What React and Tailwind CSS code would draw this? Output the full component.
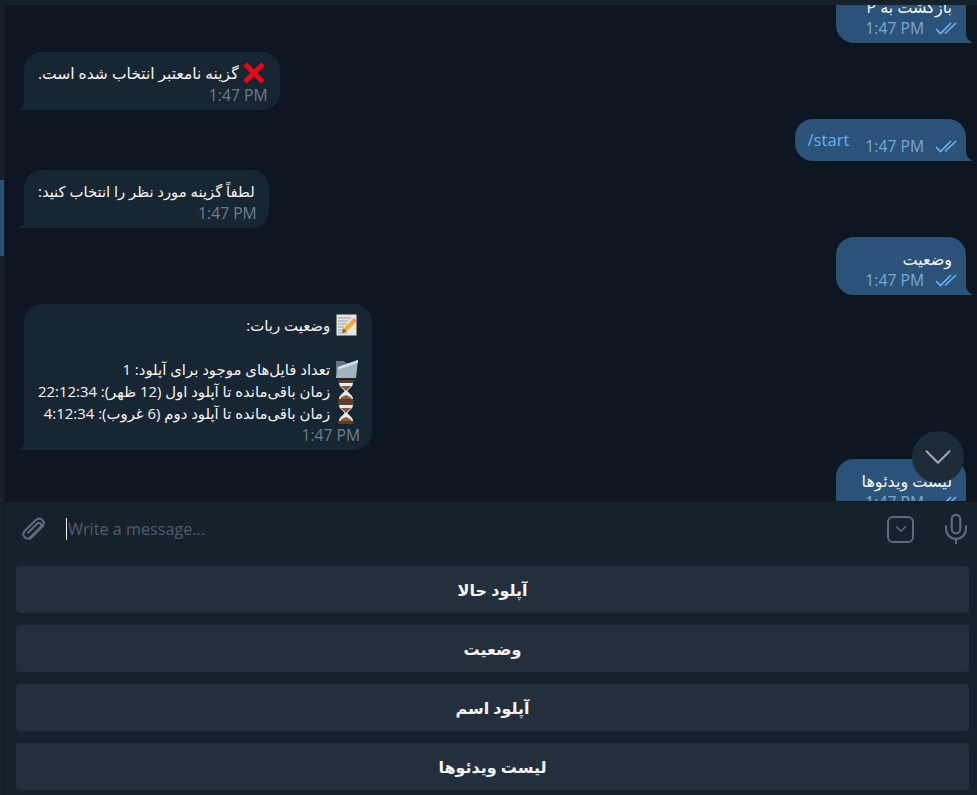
import React from 'react'
import { Mic, ChevronDown } from 'lucide-react'

function Checks() {
    return (
        <svg width="22" height="13" viewBox="0 0 22 13" fill="none" stroke="#6ab3f3" strokeWidth="1.7" className="ml-[11px] shrink-0">
            <path d="M1 7l4.500 4.500L16 1" />
            <path d="M10 11.500L21 1" />
        </svg>
    )
}

function CrossEmoji() {
    return (
        <svg width="24" height="24" viewBox="0 0 24 24" className="shrink-0">
            <path d="M3 3L21 21M21 3L3 21" stroke="#e50914" strokeWidth="5" />
        </svg>
    )
}

function MemoEmoji() {
    return (
        <svg width="21" height="22" viewBox="0 0 21 22" className="shrink-0">
            <rect x="0.500" y="0.500" width="20" height="21" fill="#e6e6df" />
            <path d="M2 4h13M2 7h10M2 10h9M2 13h6M2 16h5M2 19h9" stroke="#9a9d9f" strokeWidth="1" />
            <path d="M6 19l1.500-4.500 8.500-8.500 3 3-8.500 8.500z" fill="#edb02c" />
            <path d="M6 19l1.500-4.500 3 3z" fill="#6b5a3c" />
            <path d="M16 6l2-2 3 3-2 2z" fill="#e58a9a" />
        </svg>
    )
}

function FolderEmoji() {
    return (
        <svg width="23" height="22" viewBox="0 0 23 22" className="shrink-0">
            <path d="M1 3h8l2 2h9v15H1z" fill="#66747f" />
            <path d="M3 9L23 2l-2 18H1z" fill="#a3b2bf" />
            <path d="M3 9L23 2l-.4 3L2.600 12z" fill="#d5dee5" />
        </svg>
    )
}

function HourglassEmoji() {
    return (
        <svg width="18" height="22" viewBox="0 0 18 22" className="shrink-0">
            <rect x="1" y="0" width="16" height="3" rx="1.500" fill="#5a3d2a" />
            <rect x="1" y="19" width="16" height="3" rx="1.500" fill="#5a3d2a" />
            <path d="M2 3h14c0 4-5 6-5.500 8 .5 2 5.500 4 5.500 8H2c0-4 5-6 5.500-8C7 9 2 7 2 3z" fill="#e7e9ea" />
            <path d="M4 6h10c-1 2-4 3-5 5-1-2-4-3-5-5z" fill="#8a5a36" />
            <path d="M3.500 19c0-2 3.500-3 5.500-4 2 1 5.500 2 5.500 4z" fill="#8a5a36" />
        </svg>
    )
}

function IncomingTail() {
    return (
        <svg width="14" height="16" viewBox="0 0 14 16" className="absolute left-[-6px] bottom-0" fill="#182533">
            <path d="M6 0v8c0 3-2 6-6 8h14V0z" />
        </svg>
    )
}

function OutgoingTail() {
    return (
        <svg width="14" height="16" viewBox="0 0 14 16" className="absolute right-[-7px] bottom-0" fill="#2b5278">
            <path d="M7 0v7c0 4 3 7 7 9H0V0z" />
        </svg>
    )
}

function Incoming({ children, size = 'text-[14.9px]' }) {
    return (
        <div className="relative ml-[19px] self-start rounded-[18px] rounded-bl-none bg-[#182533] pb-[5px] pl-[14px] pr-[12px] pt-[10px]">
            <IncomingTail />
            <div dir="rtl" className={`pr-[2px] leading-[22px] text-[#f5f5f5] ${size}`}>{children}</div>
            <div className="mt-[1px] text-right text-[15.7px] leading-[20px] text-[#6d7f8f]">1:47 PM</div>
        </div>
    )
}

function Outgoing({ children }) {
    return (
        <div className="relative mr-[11px] h-[58px] w-[130px] shrink-0 self-end rounded-[18px] rounded-br-none bg-[#2b5278] pr-[9px] pt-[11px]">
            <OutgoingTail />
            <div dir="rtl" className="pr-[5px] text-[16px] leading-[22px] text-[#f5f5f5]">{children}</div>
            <div className="flex items-center justify-end">
                <span className="text-[15.7px] leading-[20px] text-[#7da8d3]">1:47 PM</span>
                <Checks />
            </div>
        </div>
    )
}

function Command({ children }) {
    return (
        <div className="relative mr-[11px] flex h-[42px] shrink-0 items-start self-end rounded-[18px] rounded-br-none bg-[#2b5278] pl-[13px] pr-[9px] pt-[10px]">
            <OutgoingTail />
            <span className="mr-[16px] text-[16.6px] leading-[22px] text-[#6ab3f3]">{children}</span>
            <div className="mt-[7px] flex items-center">
                <span className="text-[15.7px] leading-[20px] text-[#7da8d3]">1:47 PM</span>
                <Checks />
            </div>
        </div>
    )
}

function KeyboardButton({ children }) {
    return (
        <button dir="rtl" className="flex h-[47px] w-full items-center justify-center rounded-[4px] bg-[#242f3d] pt-[1px] text-[16px] font-bold text-[#f5f5f5]">
            {children}
        </button>
    )
}

function Line({ icon, children }) {
    return (
        <div className="flex items-center gap-[4px]">
            <span className="flex h-[22px] w-[24px] items-center justify-center">{icon}</span>
            <span>{children}</span>
        </div>
    )
}

export default function App() {
    return (
        <div className="flex h-[795px] w-[977px] overflow-hidden bg-[#17212b] font-['Open_Sans','DejaVu_Sans',sans-serif]">
            <aside className="w-[4px] shrink-0 pt-[180px]">
                <div className="h-[76px] bg-[#2b5278]" />
            </aside>

            <main className="flex min-w-0 flex-1 flex-col border-l border-[#131c26]">
                <div className="h-[5px] shrink-0 bg-[#17212b]" />

                <div className="relative h-[496px] shrink-0 overflow-hidden bg-[#0e1621]">
                    <div className="-mt-[20px] flex flex-col gap-[9px]">
                        <Outgoing>بازگشت به P</Outgoing>
                        <Incoming size="text-[15.5px]">
                            <div className="flex h-[22px] items-center gap-[3px]"><CrossEmoji /><span>گزینه نامعتبر انتخاب شده است.</span></div>
                        </Incoming>
                        <Command>/start</Command>
                        <Incoming size="text-[14.8px]">لطفاً گزینه مورد نظر را انتخاب کنید:</Incoming>
                        <Outgoing>وضعیت</Outgoing>
                        <Incoming>
                            <Line icon={<MemoEmoji />}>وضعیت ربات:</Line>
                            <div className="h-[22px]" />
                            <Line icon={<FolderEmoji />}>تعداد فایل‌های موجود برای آپلود: 1</Line>
                            <Line icon={<HourglassEmoji />}>زمان باقی‌مانده تا آپلود اول (12 ظهر): 22:12:34</Line>
                            <Line icon={<HourglassEmoji />}>زمان باقی‌مانده تا آپلود دوم (6 غروب): 4:12:34</Line>
                        </Incoming>
                        <Outgoing>لیست ویدئوها</Outgoing>
                    </div>

                    <div className="absolute left-[907px] top-[426px] flex h-[52px] w-[52px] items-center justify-center rounded-full bg-[#1e2c3a] text-[#a0aab4]">
                        <ChevronDown size={46} strokeWidth={1} />
                    </div>
                </div>

                <div className="flex h-[55px] shrink-0 items-center border-t border-[#0f1722] pl-[15px] pr-[4px]">
                    <svg width="28" height="28" viewBox="0 0 24 24" fill="none" stroke="#5d6c7a" strokeWidth="1.8" strokeLinecap="round" className="shrink-0">
                        <path d="M8.500 20.500l10-10c2-2 2.500-4.500.7-6.300-1.800-1.800-4.300-1.300-6.300.7L4 13.800c-1.500 1.500-1.500 3.800 0 5.300s3.500 1.300 5-.2l8.500-8.500c.9-.9 1-2.200.2-3s-2-.7-3 .2L7 15.300" />
                    </svg>
                    <div className="ml-[18px] h-[22px] w-px bg-[#f5f5f5]" />
                    <span className="ml-[1px] flex-1 text-[16.2px] text-[#505d6a]">Write a message...</span>
                    <div className="mr-[25px] flex h-[27px] w-[27px] items-center justify-center rounded-[6px] border-2 border-[#5d6c7a] text-[#5d6c7a]">
                        <ChevronDown size={18} strokeWidth={1.8} />
                    </div>
                    <Mic size={34} strokeWidth={1.5} className="text-[#5d6c7a]" />
                </div>

                <div className="flex flex-col gap-[12px] pl-[11px] pr-[8px] pt-[10px]">
                    <KeyboardButton>آپلود حالا</KeyboardButton>
                    <KeyboardButton>وضعیت</KeyboardButton>
                    <KeyboardButton>آپلود اسم</KeyboardButton>
                    <KeyboardButton>لیست ویدئوها</KeyboardButton>
                </div>
            </main>
        </div>
    )
}
